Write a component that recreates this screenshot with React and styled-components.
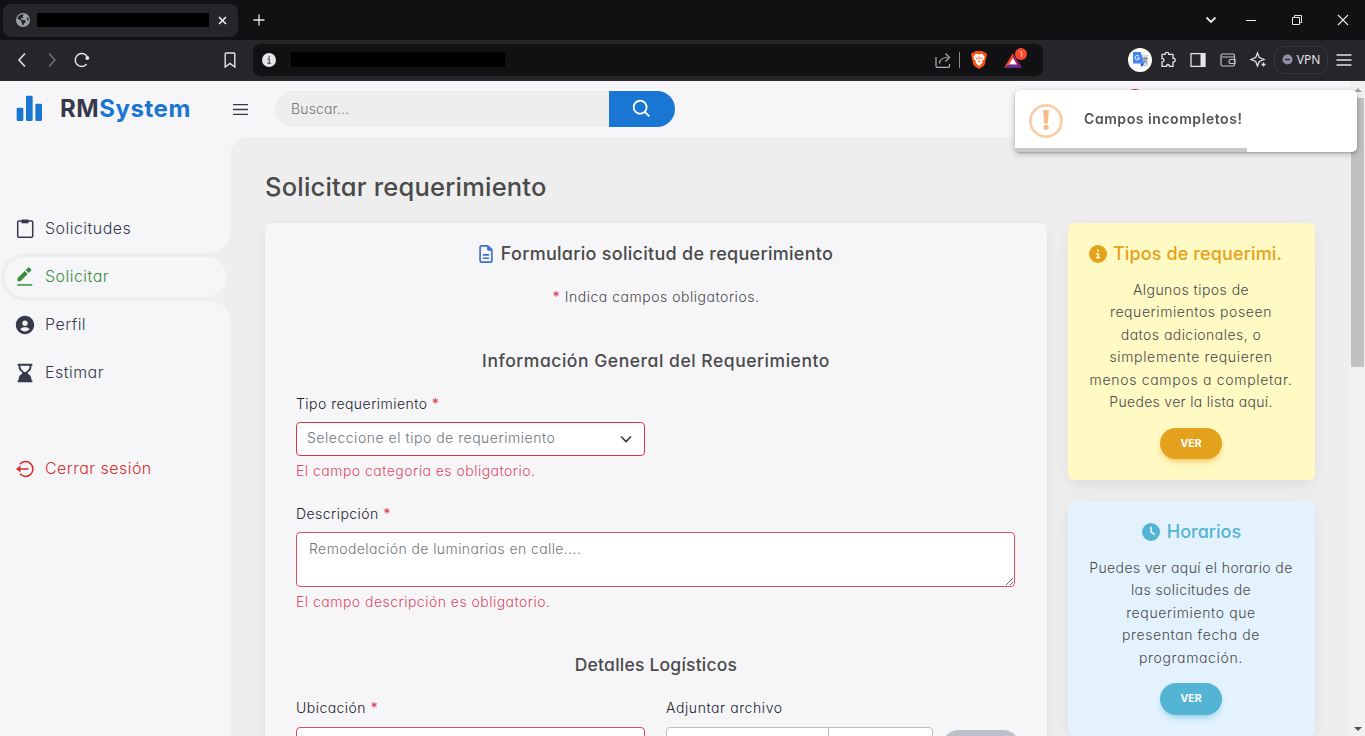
import React from "react";
import styled, { createGlobalStyle, css } from "styled-components";
import { BiSolidUserCircle, BiSolidHourglassBottom, BiSolidBarChartAlt2, BiSearch } from "react-icons/bi";
import { FaRegFileLines, FaCircleInfo, FaClock, FaEarthAmericas } from "react-icons/fa6";

const Global = createGlobalStyle`
  *, *::before, *::after { box-sizing: border-box; }
  body {
    margin: 0;
    overflow: hidden;
    font-family: Inter, "Noto Sans", sans-serif;
    font-feature-settings: "cv11";
    font-weight: 340;
    font-size: 14px;
    color: #4a4a4a;
  }
  svg { display: block; flex: none; }
`;

const Window = styled.div`
  width: 1365px;
  height: 736px;
  display: flex;
  flex-direction: column;
  overflow: hidden;
  background: #f6f6f9;
`;

/* ---------- browser ---------- */
const TabStrip = styled.div`
  height: 40px;
  flex: none;
  display: flex;
  align-items: center;
  background: #111113;
  color: #e8e8ea;
  padding: 0 16px 0 3px;
`;
const Tab = styled.div`
  width: 235px;
  height: 33px;
  display: flex;
  align-items: center;
  justify-content: space-between;
  padding: 0 11px 0 13px;
  border-radius: 8px;
  background: #26262a;
`;
const TabName = styled.div`
  display: flex;
  align-items: center;
`;
const Redacted = styled.div`
  width: ${(p) => p.$w}px;
  height: ${(p) => p.$h}px;
  margin-left: ${(p) => p.$ml}px;
  background: #000;
`;
const NewTab = styled.div`
  margin-left: 15px;
`;
const WindowButtons = styled.div`
  margin-left: auto;
  display: flex;
  align-items: center;
  gap: 34px;
  svg:first-child { margin-right: -6px; }
`;
const Toolbar = styled.div`
  height: 41px;
  flex: none;
  display: flex;
  align-items: center;
  padding: 0 13px 1px 14px;
  background: #26252a;
  border-bottom: 1px solid #2f2d33;
  color: #e4e4e8;
`;
const NavButtons = styled.div`
  display: flex;
  width: 209px;
  gap: 14px;
`;
const Address = styled.div`
  width: 790px;
  height: 32px;
  margin-left: 15px;
  display: flex;
  align-items: center;
  padding: 0 11px 0 9px;
  border-radius: 8px;
  background: #111113;
`;
const AddressTools = styled.div`
  margin-left: auto;
  display: flex;
  align-items: center;
`;
const Divider = styled.div`
  width: 1px;
  height: 16px;
  margin: 0 10px 0 8px;
  background: #8a8a8f;
`;
const Rewards = styled.div`
  margin-left: 16px;
`;
const Extensions = styled.div`
  margin-left: auto;
  display: flex;
  align-items: center;
`;
const Translate = styled.div`
  width: 24px;
  height: 24px;
  margin-right: 8px;
  display: grid;
  place-items: center;
  border-radius: 50%;
  background: #fff;
`;
const ToolIcons = styled.div`
  display: flex;
  align-items: center;
  gap: 13px;
`;
const Vpn = styled.div`
  width: 54px;
  height: 28px;
  margin: 0 8px 0 7px;
  display: flex;
  align-items: center;
  justify-content: center;
  gap: 4px;
  border: 1px solid #35343a;
  border-radius: 9px;
  font: 400 12px "Noto Sans", sans-serif;
`;

/* ---------- shell ---------- */
const Page = styled.div`
  flex: 1;
  display: flex;
  min-height: 0;
`;
const Sidebar = styled.nav`
  width: 230px;
  flex: none;
  display: flex;
  flex-direction: column;
  background: #eee;
  color: #363949;
`;
const SideTop = styled.div`
  height: 172px;
  display: flex;
  flex-direction: column;
  justify-content: space-between;
  background: #f6f6f9;
  border-bottom-right-radius: 20px;
`;
const Brand = styled.div`
  height: 56px;
  display: flex;
  align-items: center;
  padding: 0 0 1px 14px;
  gap: 14px;
  font-size: 24px;
  font-weight: 700;
  letter-spacing: 0.55px;
  color: #363949;
  svg { color: #1976d2; }
  b { font-weight: inherit; color: #1976d2; }
`;
const ActiveRow = styled.div`
  height: 48px;
  padding-left: 1px;
  background: #f6f6f9;
`;
const ActiveShell = styled.div`
  height: 48px;
  padding: 4px;
  border-radius: 24px 0 0 24px;
  background: #eee;
`;
const item = css`
  display: flex;
  align-items: center;
  font-size: 16px;
  letter-spacing: 0.47px;
  svg { margin: 2px 9px 0 0; }
`;
const ActiveItem = styled.div`
  ${item}
  height: 40px;
  padding: 0 0 3px 9px;
  border-radius: 20px;
  background: #f6f6f9;
  color: #388e3c;
`;
const Item = styled.div`
  ${item}
  height: 48px;
  padding: 0 0 3px 14px;
  color: ${(p) => p.$color || "#363949"};
  margin-top: ${(p) => p.$mt || 0}px;
`;
const SideBottom = styled.div`
  flex: 1;
  background: #f6f6f9;
  border-top-right-radius: 20px;
`;
const Column = styled.div`
  flex: 1;
  display: flex;
  flex-direction: column;
  min-width: 0;
`;
const Header = styled.header`
  height: 56px;
  flex: none;
  display: flex;
  align-items: center;
  color: #363949;
`;
const Search = styled.div`
  width: 400px;
  height: 36px;
  margin-left: 25px;
  display: flex;
  border-radius: 18px;
  overflow: hidden;
  background: #eee;
`;
const SearchText = styled.div`
  flex: 1;
  padding-left: 16px;
  line-height: 36px;
  color: #757575;
  letter-spacing: 0.15px;
`;
const SearchButton = styled.div`
  width: 66px;
  display: grid;
  place-items: center;
  background: #1976d2;
  color: #fff;
`;
const Main = styled.main`
  flex: 1;
  min-height: 0;
  padding: 31px 35px 0;
  overflow: hidden;
  border-top-left-radius: 20px;
  background: #eee;
`;
const Title = styled.h1`
  margin: 0 0 17px;
  font-size: 25.5px;
  line-height: 38px;
  font-weight: 450;
  letter-spacing: 0.2px;
`;
const Columns = styled.div`
  display: flex;
  align-items: flex-start;
  gap: 21px;
`;
const shadow = css`
  box-shadow: 0 2px 15px -3px rgba(0, 0, 0, 0.07), 0 10px 20px -2px rgba(0, 0, 0, 0.04);
`;

/* ---------- form ---------- */
const Form = styled.section`
  ${shadow}
  width: 782px;
  height: 560px;
  padding: 18px 31px 0;
  border-radius: 6px;
  background: #f6f6f9;
`;
const FormTitle = styled.h2`
  display: flex;
  align-items: center;
  justify-content: center;
  gap: 6px;
  margin: 0;
  padding-right: 2px;
  font-size: 18px;
  line-height: 26px;
  font-weight: 450;
  letter-spacing: 0.28px;
  svg { color: #3b71ca; }
`;
const Note = styled.p`
  margin: 19px 0 0;
  line-height: 22px;
  text-align: center;
  letter-spacing: 0.52px;
`;
const SectionTitle = styled.h3`
  margin: ${(p) => p.$mt}px 0 19px;
  font-size: 17.5px;
  line-height: 26px;
  font-weight: 450;
  letter-spacing: ${(p) => p.$track}px;
  text-align: center;
`;
const Label = styled.label`
  display: block;
  line-height: 22px;
  margin-bottom: 7px;
  color: #212529;
  letter-spacing: ${(p) => p.$track || 0.46}px;
`;
const Star = styled.span`
  color: #dc4c64;
  font-weight: 500;
`;
const Select = styled.div`
  width: 349px;
  height: 34px;
  display: flex;
  align-items: center;
  justify-content: space-between;
  padding: 0 12px 3px 10px;
  border: 1px solid #dc3545;
  border-radius: 4px;
  background: #fff;
  color: #6c757d;
  letter-spacing: 0.52px;
  svg { margin-top: 3px; }
`;
const ErrorText = styled.p`
  margin: 4px 0 21px;
  line-height: 22px;
  color: #dc4c64;
  letter-spacing: 0.48px;
`;
const Area = styled.textarea`
  display: block;
  width: 719px;
  height: 55px;
  padding: 5px 12px;
  border: 1px solid #dc4c64;
  border-radius: 4px;
  background: #fff;
  font: inherit;
  font-feature-settings: inherit;
  letter-spacing: 0.41px;
  line-height: 22px;
  overflow: hidden;
  &::placeholder { color: #757575; }
`;
const Fields = styled.div`
  display: flex;
  gap: 21px;
`;
const Field = styled.div`
  width: ${(p) => p.$w}px;
  flex: none;
`;
const Input = styled.div`
  height: 34px;
  margin-top: 8px;
  border: 1px solid #dc4c64;
  border-radius: 4px;
  background: #fff;
`;
const FileRow = styled.div`
  display: flex;
  gap: 10px;
  margin-top: 8px;
`;
const FileInput = styled.div`
  width: 267px;
  height: 34px;
  display: flex;
  border: 1px solid #bdbdbd;
  border-radius: 4px;
  background: #fff;
`;
const FileButton = styled.div`
  width: 162px;
  border-right: 1px solid #bdbdbd;
`;
const Upload = styled.div`
  width: 76px;
  height: 31px;
  margin-top: 3px;
  border-radius: 16px;
  background: #bdc1ca;
`;

/* ---------- side cards ---------- */
const Cards = styled.aside`
  display: flex;
  flex-direction: column;
  gap: 21px;
`;
const Card = styled.section`
  ${shadow}
  width: 247px;
  height: ${(p) => p.$h}px;
  padding: 18px 15px 0 14px;
  border-radius: 6px;
  background: ${(p) => p.$bg};
  text-align: center;
`;
const CardTitle = styled.h2`
  display: flex;
  align-items: center;
  justify-content: ${(p) => (p.$left ? "flex-start" : "center")};
  gap: ${(p) => (p.$left ? 6 : 7)}px;
  margin: 0 0 12px;
  padding-left: ${(p) => (p.$left ? 7 : 1)}px;
  font-size: 18px;
  line-height: 26px;
  font-weight: 500;
  letter-spacing: ${(p) => (p.$left ? 0.12 : 0)}px;
  color: ${(p) => p.$color};
`;
const CardLine = styled.div`
  line-height: 22.4px;
  white-space: nowrap;
  letter-spacing: ${(p) => p.$track}px;
`;
const Button = styled.div`
  width: 62px;
  height: ${(p) => p.$h}px;
  margin: ${(p) => p.$mt}px auto 0;
  line-height: ${(p) => p.$h}px;
  border-radius: 16px;
  background: ${(p) => p.$bg};
  box-shadow: 0 4px 9px -4px ${(p) => p.$bg};
  color: #fff;
  font-size: 10.5px;
  font-weight: 700;
`;

/* ---------- scrollbar and overlays ---------- */
const Scroll = styled.div`
  width: 15px;
  flex: none;
  display: flex;
  flex-direction: column;
  align-items: center;
  justify-content: space-between;
  background: #f1f1f1;
  padding: 7px 0 5px;
`;
const Thumb = styled.div`
  width: 13px;
  height: 269px;
  margin: 6px 0 auto;
  background: #c1c1c1;
`;
const Avatar = styled.div`
  position: fixed;
  left: 1127px;
  top: 89px;
  width: 16px;
  height: 16px;
  border-radius: 50%;
  background: #b3283c;
`;
const Toast = styled.div`
  position: fixed;
  left: 1015px;
  top: 90px;
  width: 342px;
  height: 62px;
  display: flex;
  align-items: center;
  padding: 0 14px;
  border-radius: 5px;
  overflow: hidden;
  background: #fff;
  box-shadow: 0 1px 2px rgba(0, 0, 0, 0.2), 0 2px 6px rgba(0, 0, 0, 0.25);
  font-weight: 600;
  color: #545454;
  letter-spacing: 0.56px;
`;
const ToastText = styled.div`
  margin: -5px 0 0 21px;
`;
const Progress = styled.div`
  position: absolute;
  left: 0;
  bottom: 0;
  width: 232px;
  height: 4px;
  background: #c9c9c9;
`;

const Line = ({ d, w = 16, h = 16, sw = 1.4, ...rest }) => (
  <svg width={w} height={h} viewBox={`0 0 ${w} ${h}`} fill="none" stroke="currentColor" strokeWidth={sw} {...rest}>
    <path d={d} />
  </svg>
);

const ClipboardIcon = () => (
  <svg width="22" height="22" viewBox="0 0 22 22">
    <rect x="3.700" y="3" width="15" height="16.300" rx="1" fill="none" stroke="currentColor" strokeWidth="1.500" />
    <path d="M7.500 1.500h7v3.800h-7z" fill="currentColor" />
  </svg>
);
const PencilIcon = () => (
  <svg width="22" height="22" viewBox="0 0 22 22" fill="currentColor">
    <path d="M3.500 12.300V15.200h2.900l7.300-7.300-2.900-2.900zM11.700 4.100l2.900 2.900L17.200 4.500q.4-.5 0-1L15.300 1.600q-.5-.4-1 0z" />
    <path d="M3.300 18.200h15v1.500h-15z" />
  </svg>
);
const LogoutIcon = () => (
  <svg width="22" height="22" viewBox="0 0 22 22">
    <path d="M5.900 6.200A7.400 7.400 0 1 1 5.900 15.800" fill="none" stroke="currentColor" strokeWidth="1.500" />
    <path d="M5 11h9.500" stroke="currentColor" strokeWidth="1.500" />
    <path d="M2 11l4.500-3.600v7.200z" fill="currentColor" />
  </svg>
);
const BraveIcon = () => (
  <svg width="18" height="20" viewBox="0 0 18 20">
    <path d="M5.500 1h7l1.500 1.500 1.800-.1L17 5l-.7 2.300-1.500 7q-.3 1.200-1.300 2L9 19l-4.500-2.700q-1-.8-1.300-2l-1.500-7L1 5l1.200-2.600 1.800.1z" fill="#fb5012" />
    <path d="M6 3.700l3 .7 3-.7 2.700 3-.6 2.300-2 2.200.4 1.300L9 16.200l-3.500-3.700.4-1.300-2-2.200L3.300 6.700z" fill="#fff" />
    <path d="M5 7.300l2.700.8-.5 1.300zM13 7.300l-2.700.8.5 1.300zM7.500 11.400L9 12.600l1.500-1.200-1.500-.5zM8.600 5.700h.8v4h-.8z" fill="#fb5012" />
  </svg>
);
const RewardsIcon = () => (
  <svg width="28" height="24" viewBox="0 0 28 24">
    <path d="M9 5L0 20l5.200-3L9 10.500z" fill="#ff4724" />
    <path d="M9 5l9 15-5.200-3L9 10.500z" fill="#9e1f63" />
    <path d="M0 20h18l-5.200-3.600H5.200z" fill="#662d91" />
    <path d="M9 10l4 6.500H5z" fill="#fff" />
    <circle cx="17" cy="6" r="6" fill="#fb4a2b" />
    <text x="17" y="9" fontSize="8" textAnchor="middle" fill="#fff">1</text>
  </svg>
);
const TranslateIcon = () => (
  <svg width="17" height="17" viewBox="0 0 17 17">
    <path d="M7 4h8q1 0 1 1v9.500q0 1-1 1H9z" fill="#d5d7dc" />
    <path d="M1.500 1h7.200l3.500 11.500H2q-1 0-1-1V2q0-1 .5-1z" fill="#4285f4" />
    <path d="M8.500 12.500h3.700L9.500 16z" fill="#1a55c4" />
    <path d="M7 5.400A2.200 2.200 0 1 0 7.400 7H5.300" fill="none" stroke="#fff" />
    <path d="M11 7.500h4.500M13 6.300v1.200M14.500 7.500q-.6 2.500-2.400 4M12 9q.8 2 3 3.200" fill="none" stroke="#607080" strokeWidth=".9" />
  </svg>
);

const warningLines = [
  ["Algunos tipos de", 0.45],
  ["requerimientos poseen", 0.57],
  ["datos adicionales, o", 0.45],
  ["simplemente requieren", 0.66],
  ["menos campos a completar.", 0.7],
  ["Puedes ver la lista aquí.", 0.31],
];
const scheduleLines = [
  ["Puedes ver aquí el horario de", 0.39],
  ["las solicitudes de", 0.42],
  ["requerimiento que", 0.62],
  ["presentan fecha de", 0.6],
  ["programación.", 0.66],
];

export default function App() {
  return (
    <Window>
      <Global />
      <TabStrip>
        <Tab>
          <TabName>
            <FaEarthAmericas size={14} color="#9aa0a6" />
            <Redacted $w={172} $h={14} $ml={7} />
          </TabName>
          <Line d="M1 1l7 7M8 1l-7 7" w={9} h={9} sw={1.7} />
        </Tab>
        <NewTab><Line d="M6 .5v11M.5 6h11" w={12} h={12} sw={1.3} /></NewTab>
        <WindowButtons>
          <Line d="M1.5 3.5l4.5 4.5 4.5-4.5" w={12} h={12} sw={1.8} />
          <Line d="M1 6.5h10" w={12} h={12} sw={1} />
          <Line d="M1.5 3.5h7v7h-7zM3.5 3.5v-2h7v7h-2" w={12} h={12} sw={1} />
          <Line d="M1 1l10 10M11 1l-10 10" w={12} h={12} sw={1.1} />
        </WindowButtons>
      </TabStrip>
      <Toolbar>
        <NavButtons>
          <Line d="M11 1.5l-6 6.5 6 6.5" sw={1.6} />
          <Line d="M5 1.5l6 6.5-6 6.5" sw={1.4} color="#75757a" />
          <svg width="16" height="16" viewBox="0 0 16 16" fill="none" stroke="currentColor" strokeWidth="1.5">
            <path d="M12.600 12.300A6.500 6.500 0 1 1 13.600 5.200" />
            <circle cx="13.300" cy="6" r="2" fill="currentColor" stroke="none" />
          </svg>
        </NavButtons>
        <Line d="M3.200 1h7.600q1 0 1 1v13l-4.800-3.600L2.200 15V2q0-1 1-1z" w={15} h={16} />
        <Address>
          <svg width="14" height="14" viewBox="0 0 14 14">
            <circle cx="7" cy="7" r="7" fill="#e4e4e8" />
            <path d="M5.500 6h1.800v4M5.300 10.200h3.600M7.200 3.100v1.600" fill="none" stroke="#66666b" strokeWidth="1.400" />
          </svg>
          <Redacted $w={214} $h={15} $ml={15} />
          <AddressTools>
            <Line d="M1 5v9q0 1.300 1.300 1.300h11q1.200 0 1.200-1.300v-2M4.500 11.500q.3-6 8-6M10.500 1.500l4 4-4 4" sw={1.2} color="#b5b5b9" />
            <Divider />
            <BraveIcon />
            <Rewards><RewardsIcon /></Rewards>
          </AddressTools>
        </Address>
        <Extensions>
          <Translate><TranslateIcon /></Translate>
          <ToolIcons>
            <Line d="M2 3.300h3.200c-.5-2.700 4-2.700 3.500 0H13v4c3-.4 3 4.100 0 3.700v4.300H9.500c.3-2.400-3.300-2.400-3 0H2v-4.500c2.600.3 2.600-3.600 0-3.300z" w={17} h={17} sw={1.3} />
            <svg width="16" height="16" viewBox="0 0 16 16">
              <path d="M1 1.700h14v12.600H1z" fill="none" stroke="currentColor" strokeWidth="1.300" />
              <path d="M10.500 1.700H15v12.600h-4.500z" fill="currentColor" />
            </svg>
            <Line d="M15.500 5V3.500q0-1.500-1.500-1.500H3.500Q2 2 2 3.500v9Q2 14 3.500 14H14q1.500 0 1.500-1.500V5H3M16 7.500h-4.500q-1.500 0-1.500 2t1.500 2H16z" w={17} h={16} sw={1.2} color="#c4c4c8" />
            <svg width="18" height="18" viewBox="0 0 18 18" fill="none" stroke="currentColor" strokeWidth="1.300">
              <path d="M8.500 2l1.800 4.600L15 8.500l-4.700 1.900L8.500 15l-1.800-4.600L2 8.500l4.700-1.900z" />
              <path d="M14.500 11.500v4M12.500 13.500h4" />
            </svg>
          </ToolIcons>
          <Vpn>
            <svg width="11" height="11" viewBox="0 0 11 11">
              <circle cx="5.500" cy="5.500" r="5" fill="#8f90a6" />
              <path d="M3 5.500h5" stroke="#26252a" strokeWidth="1.400" />
            </svg>
            VPN
          </Vpn>
          <Line d="M.5 3h15M.5 8h15M.5 13h15" sw={1.3} />
        </Extensions>
      </Toolbar>

      <Page>
        <Sidebar>
          <SideTop>
            <Brand><BiSolidBarChartAlt2 size={32} /><span>RM<b>System</b></span></Brand>
            <Item><ClipboardIcon />Solicitudes</Item>
          </SideTop>
          <ActiveRow><ActiveShell><ActiveItem><PencilIcon />Solicitar</ActiveItem></ActiveShell></ActiveRow>
          <SideBottom>
            <Item><BiSolidUserCircle size={22} />Perfil</Item>
            <Item><BiSolidHourglassBottom size={22} />Estimar</Item>
            <Item $mt={48} $color="#d32f2f"><LogoutIcon />Cerrar sesión</Item>
          </SideBottom>
        </Sidebar>
        <Column>
          <Header>
            <Line d="M3 5.600h15M3 10.500h15M3 15.400h15" w={20} h={20} sw={1.3} />
            <Search>
              <SearchText>Buscar...</SearchText>
              <SearchButton><BiSearch size={22} /></SearchButton>
            </Search>
          </Header>
          <Main>
            <Title>Solicitar requerimiento</Title>
            <Columns>
              <Form>
                <FormTitle><FaRegFileLines size={18} />Formulario solicitud de requerimiento</FormTitle>
                <Note><Star>*</Star> Indica campos obligatorios.</Note>
                <SectionTitle $mt={40} $track={0.54}>Información General del Requerimiento</SectionTitle>
                <Label>Tipo requerimiento <Star>*</Star></Label>
                <Select>Seleccione el tipo de requerimiento<Line d="M1 3.500l5 5 5-5" w={12} h={12} sw={1.7} color="#343a40" /></Select>
                <ErrorText>El campo categoría es obligatorio.</ErrorText>
                <Label>Descripción <Star>*</Star></Label>
                <Area placeholder="Remodelación de luminarias en calle...." />
                <ErrorText>El campo descripción es obligatorio.</ErrorText>
                <SectionTitle $mt={39} $track={0.22}>Detalles Logísticos</SectionTitle>
                <Fields>
                  <Field $w={349}><Label>Ubicación <Star>*</Star></Label><Input /></Field>
                  <Field $w={353}>
                    <Label $track={0.58}>Adjuntar archivo</Label>
                    <FileRow><FileInput><FileButton /></FileInput><Upload /></FileRow>
                  </Field>
                </Fields>
              </Form>
              <Cards>
                <Card $h={257} $bg="#fff9c4">
                  <CardTitle $left $color="#e4a11b"><FaCircleInfo size={18} />Tipos de requerimi.</CardTitle>
                  {warningLines.map(([text, track]) => <CardLine key={text} $track={track}>{text}</CardLine>)}
                  <Button $h={31} $mt={15} $bg="#e4a11b">VER</Button>
                </Card>
                <Card $h={235} $bg="#e3f2fd">
                  <CardTitle $color="#54b4d3"><FaClock size={18} />Horarios</CardTitle>
                  {scheduleLines.map(([text, track]) => <CardLine key={text} $track={track}>{text}</CardLine>)}
                  <Button $h={32} $mt={14} $bg="#54b4d3">VER</Button>
                </Card>
              </Cards>
            </Columns>
          </Main>
        </Column>
        <Scroll>
          <svg width="8" height="4" viewBox="0 0 8 4"><path d="M0 4l4-4 4 4z" fill="#a3a3a3" /></svg>
          <Thumb />
          <svg width="8" height="4" viewBox="0 0 8 4"><path d="M0 0l4 4 4-4z" fill="#505050" /></svg>
        </Scroll>
      </Page>

      <Avatar />
      <Toast>
        <svg width="34" height="34" viewBox="0 0 34 34">
          <circle cx="17" cy="17" r="15.600" fill="none" stroke="#facea8" strokeWidth="2.700" />
          <path d="M14.200 6h5.600l-.9 13.500h-3.800z" fill="#f8bb86" />
          <circle cx="17" cy="23.300" r="2.600" fill="#f8bb86" />
        </svg>
        <ToastText>Campos incompletos!</ToastText>
        <Progress />
      </Toast>
    </Window>
  );
}
